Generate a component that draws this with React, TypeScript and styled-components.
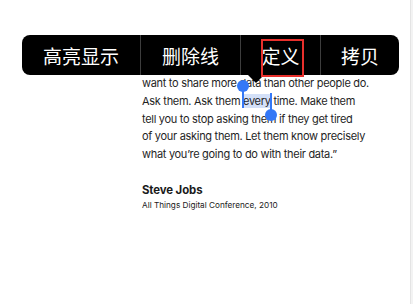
import styled, { createGlobalStyle } from "styled-components";

const GlobalStyle = createGlobalStyle`
  html, body {
    margin: 0;
    padding: 0;
    background: #ffffff;
  }
  body {
    font-family: Inter, "Noto Sans", "Noto Sans CJK SC", sans-serif;
  }
`;

const Screen = styled.div`
  position: relative;
  width: 413px;
  height: 304px;
  display: flex;
  overflow: hidden;
`;

const Page = styled.div`
  flex: 1;
  position: relative;
  background: #ffffff;
`;

const ScrollTrack = styled.div`
  width: 2px;
  background: #f3f3f3;
  border-left: 1px solid #e4e4e4;
`;

const Article = styled.article`
  padding: 75px 0 0 142px;
  color: #1f1f1f;
`;

const Quote = styled.p`
  margin: 0;
  font-size: 11px;
  letter-spacing: -0.3px;
  line-height: 17.8px;
`;

const Line = styled.span`
  display: block;
  white-space: nowrap;
`;

const Selected = styled.span`
  position: relative;
  background: #d3e0f8;
`;

const Handle = styled.span<{ $end?: boolean }>`
  position: absolute;
  ${(p) => (p.$end ? "right: -1px;" : "left: -1px;")}
  top: ${(p) => (p.$end ? "-1px" : "-8px")};
  width: 2px;
  height: 22px;
  background: #3478f6;

  &::after {
    content: "";
    position: absolute;
    left: -5px;
    ${(p) => (p.$end ? "bottom: -6px;" : "top: -6px;")}
    width: 12px;
    height: 12px;
    border-radius: 50%;
    background: #3478f6;
  }
`;

const Author = styled.h4`
  margin: 18px 0 0;
  font-size: 11.4px;
  font-weight: 700;
  letter-spacing: -0.1px;
  line-height: 16px;
  color: #1a1a1a;
`;

const Source = styled.div`
  margin-top: 2px;
  font-size: 8.2px;
  line-height: 11px;
  color: #1a1a1a;
`;

const Menu = styled.div`
  position: absolute;
  left: 22px;
  top: 35px;
  width: 377px;
  height: 40px;
  display: grid;
  grid-template-columns: 118px 100px 80px 79px;
  background: #000000;
  border-radius: 8px;
`;

const MenuItem = styled.div<{ $first?: boolean }>`
  display: flex;
  align-items: center;
  justify-content: center;
  color: #ffffff;
  font-family: "Noto Sans CJK SC", sans-serif;
  font-size: 19px;
  font-weight: 400;
  border-left: ${(p) => (p.$first ? "none" : "1px solid #3d3d3d")};
`;

const Pointer = styled.div`
  position: absolute;
  left: 248px;
  top: 75px;
  width: 0;
  height: 0;
  border-left: 8px solid transparent;
  border-right: 8px solid transparent;
  border-top: 8px solid #000000;
`;

const Marker = styled.div`
  position: absolute;
  left: 261px;
  top: 39px;
  width: 39px;
  height: 34px;
  border: 2px solid #e8302c;
`;

export default function App() {
  return (
    <>
      <GlobalStyle />
      <Screen>
        <Page>
          <Article>
            <Quote>
              <Line>want to share more data than other people do.</Line>
              <Line>
                Ask them. Ask them{" "}
                <Selected>
                  <Handle />
                  every
                  <Handle $end />
                </Selected>{" "}
                time. Make them
              </Line>
              <Line>tell you to stop asking them if they get tired</Line>
              <Line>of your asking them. Let them know precisely</Line>
              <Line>what you’re going to do with their data.”</Line>
            </Quote>
            <Author>Steve Jobs</Author>
            <Source>All Things Digital Conference, 2010</Source>
          </Article>
          <Menu>
            <MenuItem $first>高亮显示</MenuItem>
            <MenuItem>删除线</MenuItem>
            <MenuItem>定义</MenuItem>
            <MenuItem>拷贝</MenuItem>
          </Menu>
          <Pointer />
          <Marker />
        </Page>
        <ScrollTrack />
      </Screen>
    </>
  );
}
